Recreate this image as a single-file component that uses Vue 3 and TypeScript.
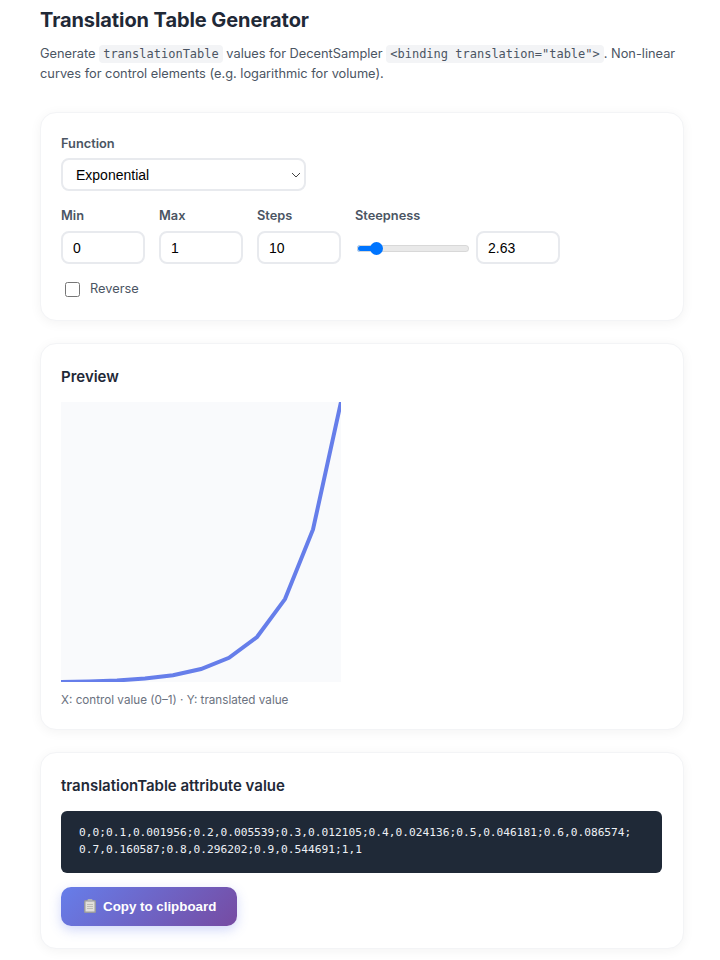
<template>
  <div class="page">
    <h1>Translation Table Generator</h1>
    <p class="intro">
      Generate <code>translationTable</code> values for DecentSampler <code>&lt;binding translation="table"&gt;</code>. Non-linear curves for control elements (e.g. logarithmic for volume).
    </p>

    <section class="card controls">
      <div class="field">
        <label for="fn">Function</label>
        <div class="select-wrap">
          <select id="fn" v-model="fn" class="fn-select">
            <option value="linear">Linear</option>
            <option value="log">Logarithmic</option>
            <option value="exp">Exponential</option>
          </select>
          <svg class="chevron" width="10" height="6" viewBox="0 0 10 6">
            <path d="M1 1l4 4 4-4" fill="none" stroke="#444" stroke-width="1" />
          </svg>
        </div>
      </div>
      <div class="row">
        <div class="field">
          <label for="min">Min</label>
          <input id="min" v-model.number="min" type="text" class="num" />
        </div>
        <div class="field">
          <label for="max">Max</label>
          <input id="max" v-model.number="max" type="text" class="num" />
        </div>
        <div class="field">
          <label for="steps">Steps</label>
          <input id="steps" v-model.number="steps" type="text" class="num" />
        </div>
        <div class="field">
          <label for="steep">Steepness</label>
          <div class="steep">
            <input id="steep" v-model.number="steepness" type="range" min="1" max="13" step="0.01" :style="{ '--fill': sliderFill }" />
            <input v-model.number="steepness" type="text" class="num" />
          </div>
        </div>
      </div>
      <label class="check">
        <input v-model="reverse" type="checkbox" />
        <span>Reverse</span>
      </label>
    </section>

    <section class="card">
      <h2>Preview</h2>
      <svg class="chart" width="280" height="280" viewBox="0 0 280 280">
        <polyline :points="linePoints" fill="none" stroke="#667eea" stroke-width="4" />
      </svg>
      <p class="caption">X: control value (0–1) · Y: translated value</p>
    </section>

    <section class="card result">
      <h2>translationTable attribute value</h2>
      <pre class="output">{{ displayTable }}</pre>
      <button class="copy" @click="copyTable">
        <svg width="12" height="14" viewBox="0 0 12 14">
          <rect x="0" y="1" width="12" height="13" rx="1.5" fill="#9a9ba0" />
          <rect x="1.5" y="2.5" width="9" height="10" fill="#e2e0da" />
          <path d="M3 5.5h6M3 7.5h6M3 9.5h6" stroke="#bdbcb7" stroke-width="1" />
          <rect x="3.5" y="0" width="5" height="2.5" rx="1" fill="#b0b2b6" />
        </svg>
        Copy to clipboard
      </button>
    </section>
  </div>
</template>

<script setup lang="ts">
import { computed, ref } from 'vue'

const fn = ref<string>('exp')
const min = ref<number>(0)
const max = ref<number>(1)
const steps = ref<number>(10)
const steepness = ref<number>(2.63)
const reverse = ref<boolean>(false)

const curve = (x: number): number => {
  const k = steepness.value
  if (fn.value === 'exp') return (Math.pow(10, k * x) - 1) / (Math.pow(10, k) - 1)
  if (fn.value === 'log') return Math.log10(1 + x * (Math.pow(10, k) - 1)) / k
  return x
}

const points = computed(() => {
  const out: [number, number][] = []
  for (let i = 0; i <= steps.value; i++) {
    const x = i / steps.value
    const t = reverse.value ? 1 - x : x
    out.push([x, min.value + (max.value - min.value) * curve(t)])
  }
  return out
})

const table = computed(() => points.value.map(([x, y]) => `${+x.toFixed(6)},${+y.toFixed(6)}`).join(';'))
// zero width space so the long value can wrap after a pair
const displayTable = computed(() => table.value.replace(/;/g, ';\u200b'))
const linePoints = computed(() => points.value.map(([x, y]) => `${x * 280},${(1 - y) * 280}`).join(' '))
// thumb is 13px on a 112px track
const sliderFill = computed(() => `${6.5 + ((steepness.value - 1) / 12) * 99}px`)

const copyTable = () => {
  navigator.clipboard?.writeText(table.value)
}
</script>

<style scoped>
.page {
  padding: 0 36px 12px 40px;
  font-family: Inter, "Liberation Sans", sans-serif;
  color: #1f2937;
}
h1 {
  margin: 0;
  padding-top: 8px;
  font-size: 20px;
  line-height: 24px;
  font-weight: 700;
  letter-spacing: -0.08px;
}
.intro {
  margin: 12px 0 28px;
  font-size: 12.8px;
  line-height: 20px;
  color: #4b5563;
}
code {
  font-family: "DejaVu Sans Mono", monospace;
  font-size: 12px;
  background: #f3f4f6;
  padding: 2px 4px;
  border-radius: 4px;
}
.card {
  background: #fff;
  border: 1px solid #f3f4f6;
  border-radius: 16px;
  padding: 22px 20px 21px;
  margin-bottom: 22px;
  box-shadow: 0 2px 12px rgba(0, 0, 0, 0.05);
}
.controls {
  padding: 23px 20px 23px;
}
.result {
  padding-bottom: 22px;
}
.field {
  display: flex;
  flex-direction: column;
}
.field label {
  font-size: 12.8px;
  line-height: 16px;
  font-weight: 600;
  color: #4b5563;
  margin-bottom: 6px;
}
.row .field label {
  margin-bottom: 7px;
}
.select-wrap {
  position: relative;
  width: 245px;
}
.chevron {
  position: absolute;
  right: 5px;
  top: 14px;
  pointer-events: none;
}
.fn-select {
  appearance: none;
  box-sizing: border-box;
  display: block;
  width: 245px;
  height: 33px;
  padding: 0 13px;
  border: 2px solid #e8eaee;
  border-radius: 8px;
  background: #fff;
  font-family: "Liberation Sans", sans-serif;
  font-size: 14px;
  color: #000;
}
.row {
  display: flex;
  gap: 14px;
  margin-top: 17px;
}
.num {
  box-sizing: border-box;
  width: 84px;
  height: 33px;
  padding: 0 10px;
  border: 2px solid #e8eaee;
  border-radius: 8px;
  font-family: "Liberation Sans", sans-serif;
  font-size: 14px;
  color: #000;
  outline: none;
}
.steep {
  display: flex;
  align-items: center;
  gap: 7px;
}
.steep input[type="range"] {
  appearance: none;
  box-sizing: border-box;
  width: 112px;
  height: 7px;
  margin: 2px 0 0 2px;
  border-radius: 4px;
  background: linear-gradient(#0075ff, #0075ff) no-repeat left / var(--fill) 100%, #e9e9e9;
  box-shadow: inset 0 0 0 1px #d8d8d8;
}
.steep input[type="range"]::-webkit-slider-thumb {
  appearance: none;
  width: 13px;
  height: 13px;
  border-radius: 50%;
  background: #0075ff;
}
.check {
  display: flex;
  align-items: center;
  gap: 10px;
  margin-top: 17px;
  padding-left: 4px;
  font-size: 12.8px;
  line-height: 16px;
  color: #4b5563;
}
.check input {
  width: 15px;
  height: 15px;
  margin: 0;
}
h2 {
  margin: 1px 0 15px;
  font-size: 15px;
  line-height: 20px;
  font-weight: 600;
}
.chart {
  display: block;
  background: #f9fafc;
}
.caption {
  margin: 10px 0 0;
  font-size: 11.7px;
  line-height: 16px;
  color: #6b7280;
}
.output {
  margin: 0 1px 0 0;
  padding: 14px 18px;
  background: #1f2937;
  border-radius: 6px;
  color: #edf0f5;
  font-family: "DejaVu Sans Mono", monospace;
  font-size: 11.2px;
  line-height: 16.8px;
  white-space: pre-wrap;
}
.copy {
  display: flex;
  align-items: center;
  gap: 7px;
  margin-top: 14px;
  height: 39px;
  padding: 0 21px 0 23px;
  border: none;
  border-radius: 10px;
  background: linear-gradient(135deg, #667eea 0%, #764ba2 100%);
  box-shadow: 0 4px 12px rgba(102, 126, 234, 0.3);
  color: #fff;
  font-family: "Liberation Sans", sans-serif;
  font-size: 13.33px;
  font-weight: 700;
}
</style>

<style>
body {
  background: #fff;
}
</style>
